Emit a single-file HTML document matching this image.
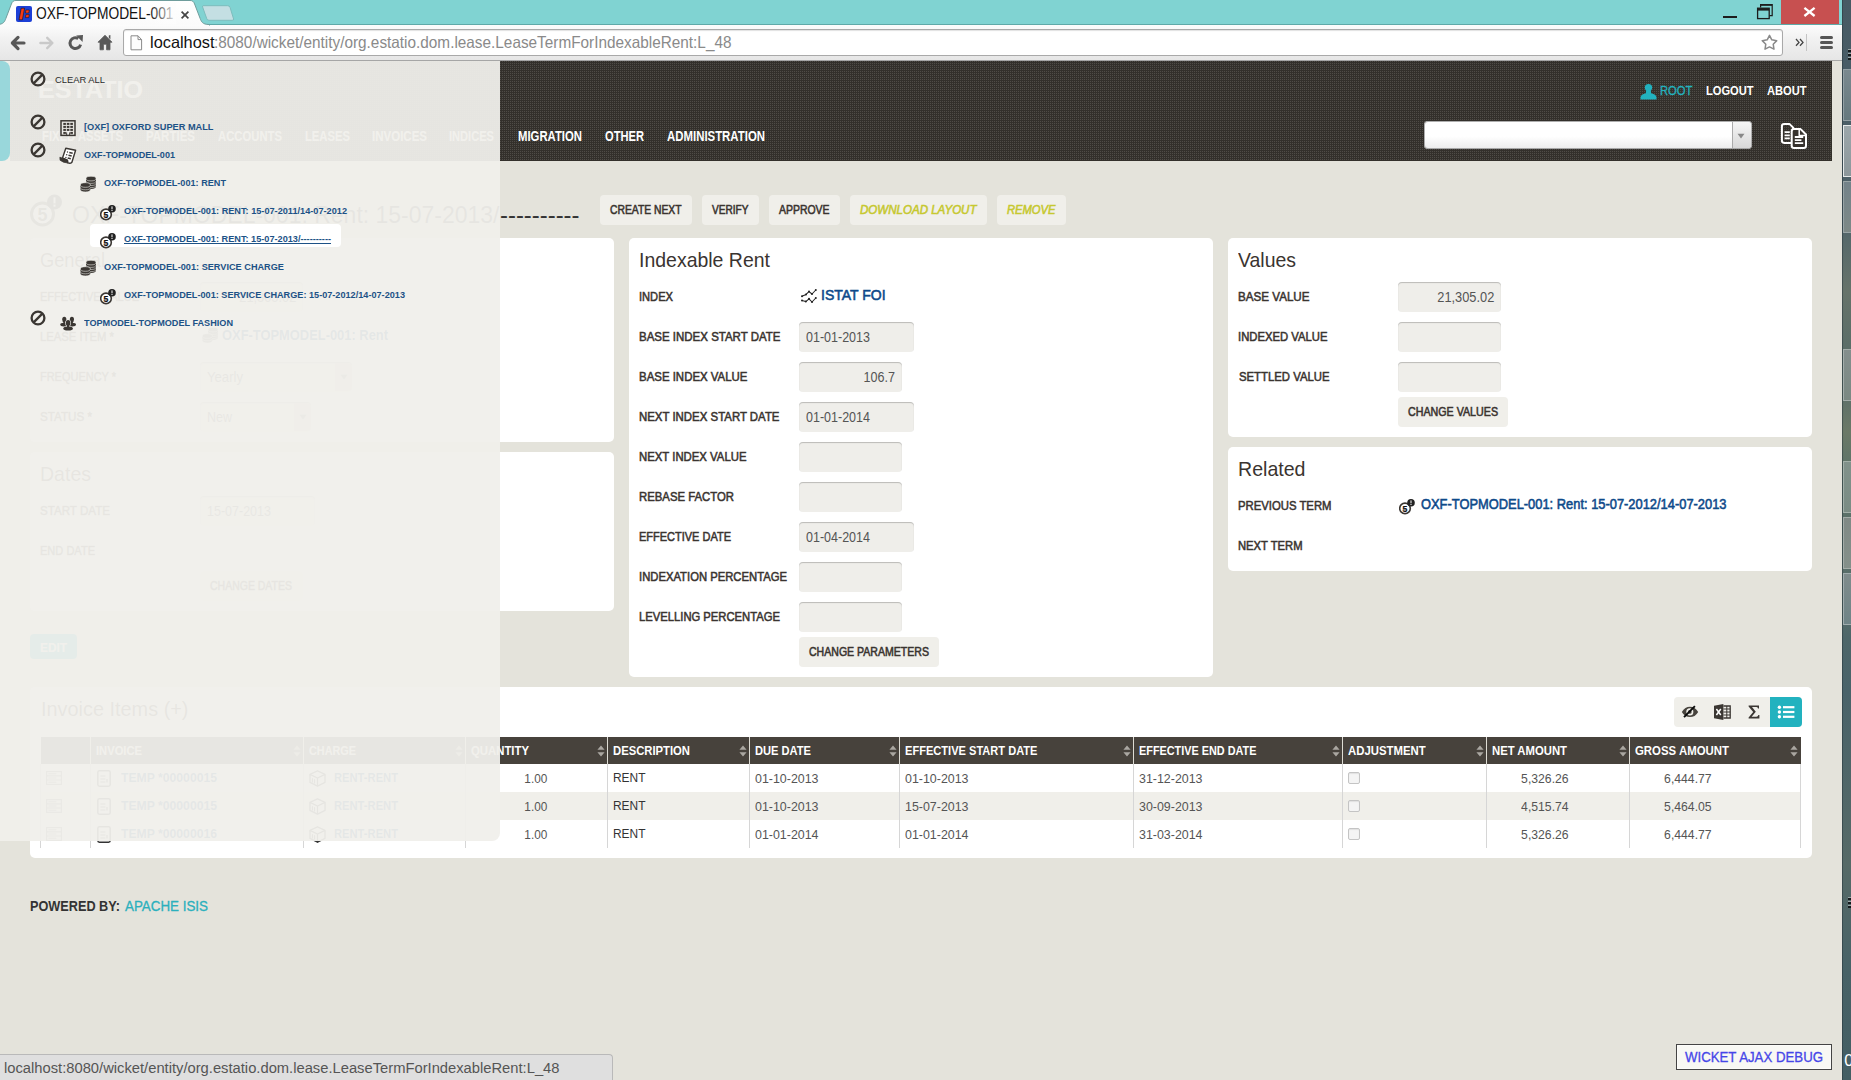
<!DOCTYPE html><html lang="en"><head><meta charset="utf-8"><title>OXF-TOPMODEL-001</title><style>
html,body{margin:0;padding:0}body{width:1851px;height:1080px;overflow:hidden;position:relative;background:#e4e3db;font-family:"Liberation Sans", Arial, sans-serif}
.t{position:absolute;white-space:pre;display:block}
</style></head><body>
<div style="position:absolute;left:0px;top:61px;width:1842px;height:1019px;background:#e4e3db;"></div>
<div style="position:absolute;left:10px;top:61px;width:1822px;height:100px;background:#33302b;background:linear-gradient(0deg,#33302b 50%,transparent 50%) 0 0/2px 2px,linear-gradient(90deg,#4f4c47 50%,#33302b 50%) 0 0/2px 2px;"></div>
<span class="t" style="top:73.68px;font-size:24px;line-height:31px;height:31px;color:#fff;font-weight:700;left:38px;transform-origin:0 50%;transform:scaleX(1.0453);">ESTATIO</span>
<span class="t" style="top:127.15px;font-size:14px;line-height:18px;height:18px;color:#fff;font-weight:700;left:42px;transform-origin:0 50%;transform:scaleX(0.8050);">FIXED ASSETS</span>
<span class="t" style="top:127.15px;font-size:14px;line-height:18px;height:18px;color:#fff;font-weight:700;left:146px;transform-origin:0 50%;transform:scaleX(0.8216);">PARTIES</span>
<span class="t" style="top:127.15px;font-size:14px;line-height:18px;height:18px;color:#fff;font-weight:700;left:218px;transform-origin:0 50%;transform:scaleX(0.8066);">ACCOUNTS</span>
<span class="t" style="top:127.15px;font-size:14px;line-height:18px;height:18px;color:#fff;font-weight:700;left:305px;transform-origin:0 50%;transform:scaleX(0.8033);">LEASES</span>
<span class="t" style="top:127.15px;font-size:14px;line-height:18px;height:18px;color:#fff;font-weight:700;left:372px;transform-origin:0 50%;transform:scaleX(0.8220);">INVOICES</span>
<span class="t" style="top:127.15px;font-size:14px;line-height:18px;height:18px;color:#fff;font-weight:700;left:449px;transform-origin:0 50%;transform:scaleX(0.7923);">INDICES</span>
<span class="t" style="top:127.15px;font-size:14px;line-height:18px;height:18px;color:#fff;font-weight:700;left:518px;transform-origin:0 50%;transform:scaleX(0.8093);">MIGRATION</span>
<span class="t" style="top:127.15px;font-size:14px;line-height:18px;height:18px;color:#fff;font-weight:700;left:605px;transform-origin:0 50%;transform:scaleX(0.7959);">OTHER</span>
<span class="t" style="top:127.15px;font-size:14px;line-height:18px;height:18px;color:#fff;font-weight:700;left:667px;transform-origin:0 50%;transform:scaleX(0.8147);">ADMINISTRATION</span>
<svg style="position:absolute;left:1640px;top:83px;" width="17" height="17" viewBox="0 0 17 17"><circle cx="8.5" cy="4.6" r="3.7" fill="#22b2bf"/><path d="M6.3 7 h4.4 l0.5 3.2 q5 1 5.3 4 l0 2.3 h-16 l0 -2.3 q0.3 -3 5.3 -4z" fill="#22b2bf"/></svg>
<span class="t" style="top:82.20px;font-size:13px;line-height:17px;height:17px;color:#22b2bf;left:1660px;transform-origin:0 50%;transform:scaleX(0.8652);-webkit-text-stroke:0.3px #22b2bf;">ROOT</span>
<span class="t" style="top:82.20px;font-size:13px;line-height:17px;height:17px;color:#fff;font-weight:700;left:1706px;transform-origin:0 50%;transform:scaleX(0.8542);">LOGOUT</span>
<span class="t" style="top:82.20px;font-size:13px;line-height:17px;height:17px;color:#fff;font-weight:700;left:1767px;transform-origin:0 50%;transform:scaleX(0.8546);">ABOUT</span>
<div style="position:absolute;left:1424px;top:121px;width:328px;height:28px;background:#fff;border-radius:4px;background:linear-gradient(#fff 55%,#ececec);box-shadow:0 0 0 1px rgba(120,120,120,0.6) inset;"></div>
<div style="position:absolute;left:1732px;top:122px;width:19px;height:26px;background:#e6e6e6;border-radius:0 3px 3px 0;border-left:1px solid #aaa;background:linear-gradient(#f6f6f6,#d8d8d8);box-sizing:border-box"></div>
<svg style="position:absolute;left:1737px;top:133px;" width="8" height="6" viewBox="0 0 8 6"><path d="M0.5 0.8h7L4 5.4z" fill="#888"/></svg>
<svg style="position:absolute;left:1780px;top:123px;" width="28" height="27" viewBox="0 0 28 27"><g fill="none" stroke="#fff" stroke-width="2" stroke-linejoin="round"><path d="M11 19.9 H4.2 Q1.9 19.9 1.9 17.6 V3.4 Q1.9 1.1 4.2 1.1 H9.6 L13.2 4.6 V7"/><path d="M14 25.1 Q11.7 25.1 11.7 22.8 V8.4 Q11.7 6.1 14 6.1 H20.6 L26 11.5 V22.8 Q26 25.1 23.7 25.1z" fill="#37332e"/><path d="M19.2 7 V12.6 H25" stroke-width="1.5"/></g><path d="M4.6 9.2h5.2M4.6 12.3h5.2M4.6 15.4h5.2M14.8 14h8.4M14.8 17.1h6.6M14.8 20.2h8.4" stroke="#fff" stroke-width="1.8"/></svg>
<svg style="position:absolute;left:29px;top:194px;" width="36" height="34" viewBox="0 0 36 34"><circle cx="13.5" cy="20" r="11" fill="#fff" stroke="#3b3733" stroke-width="3"/><text x="13.5" y="26.5" font-family="Liberation Sans,Arial,sans-serif" font-size="18" font-weight="700" text-anchor="middle" fill="#3b3733">5</text><circle cx="25.5" cy="8" r="7.6" fill="#222"/><rect x="24.5" y="3.4" width="2" height="6" fill="#fff"/><rect x="24.5" y="10.6" width="2" height="2" fill="#fff"/></svg>
<span class="t" style="top:199.01px;font-size:24.5px;line-height:32px;height:32px;color:#333;left:72px;transform-origin:0 50%;transform:scaleX(0.9381);">OXF-TOPMODEL-001: Rent: 15-07-2013/</span>
<span class="t" style="top:199.01px;font-size:24.5px;line-height:32px;height:32px;color:#333;left:500px;transform-origin:0 50%;transform:scaleX(0.9743);">----------</span>
<div style="position:absolute;left:600px;top:195px;width:92px;height:30px;background:#f0efea;border-radius:4px;"></div>
<span class="t" style="top:202.14px;font-size:12px;line-height:16px;height:16px;color:#3a3430;-webkit-text-stroke:0.55px #3a3430;left:610px;transform-origin:0 50%;transform:scaleX(0.8602);">CREATE NEXT</span>
<div style="position:absolute;left:702px;top:195px;width:57px;height:30px;background:#f0efea;border-radius:4px;"></div>
<span class="t" style="top:202.14px;font-size:12px;line-height:16px;height:16px;color:#3a3430;-webkit-text-stroke:0.55px #3a3430;left:712px;transform-origin:0 50%;transform:scaleX(0.8421);">VERIFY</span>
<div style="position:absolute;left:769px;top:195px;width:71px;height:30px;background:#f0efea;border-radius:4px;"></div>
<span class="t" style="top:202.14px;font-size:12px;line-height:16px;height:16px;color:#3a3430;-webkit-text-stroke:0.55px #3a3430;left:779px;transform-origin:0 50%;transform:scaleX(0.8702);">APPROVE</span>
<div style="position:absolute;left:850px;top:195px;width:137px;height:30px;background:#f0efea;border-radius:4px;"></div>
<span class="t" style="top:202.14px;font-size:12px;line-height:16px;height:16px;color:#c6c830;-webkit-text-stroke:0.55px #c6c830;font-style:italic;left:860px;transform-origin:0 50%;transform:scaleX(0.9618);">DOWNLOAD LAYOUT</span>
<div style="position:absolute;left:997px;top:195px;width:69px;height:30px;background:#f0efea;border-radius:4px;"></div>
<span class="t" style="top:202.14px;font-size:12px;line-height:16px;height:16px;color:#c6c830;-webkit-text-stroke:0.55px #c6c830;font-style:italic;left:1007px;transform-origin:0 50%;transform:scaleX(0.9324);">REMOVE</span>
<div style="position:absolute;left:30px;top:238px;width:584px;height:204px;background:#fff;border-radius:5px;"></div>
<div style="position:absolute;left:30px;top:452px;width:584px;height:158.5px;background:#fff;border-radius:5px;"></div>
<div style="position:absolute;left:629px;top:238px;width:584px;height:439px;background:#fff;border-radius:5px;"></div>
<div style="position:absolute;left:1228px;top:238px;width:584px;height:199px;background:#fff;border-radius:5px;"></div>
<div style="position:absolute;left:1228px;top:447px;width:584px;height:124px;background:#fff;border-radius:5px;"></div>
<div style="position:absolute;left:30px;top:687px;width:1782px;height:171px;background:#fff;border-radius:5px;"></div>
<span class="t" style="top:245.72px;font-size:21px;line-height:27px;height:27px;color:#3a3430;left:40px;transform-origin:0 50%;transform:scaleX(0.8699);">General</span>
<span class="t" style="top:288.00px;font-size:13px;line-height:17px;height:17px;color:#3a3430;-webkit-text-stroke:0.55px #3a3430;left:40px;transform-origin:0 50%;transform:scaleX(0.8476);">EFFECTIVE VALUE</span>
<div style="position:absolute;left:200px;top:282px;width:103px;height:30px;background:#efeeea;border-radius:4px;box-shadow:inset 0 1px 1px rgba(0,0,0,0.22);"></div>
<span class="t" style="top:288.15px;font-size:14px;line-height:18px;height:18px;color:#555555;right:1555px;transform-origin:100% 50%;transform:scaleX(0.9150);">21,305.02</span>
<span class="t" style="top:328.00px;font-size:13px;line-height:17px;height:17px;color:#3a3430;-webkit-text-stroke:0.55px #3a3430;left:40px;transform-origin:0 50%;transform:scaleX(0.8680);">LEASE ITEM *</span>
<svg style="position:absolute;left:202px;top:327px;" width="17" height="17" viewBox="0 0 17 17"><path d="M6 2.6 V10.6 A5 2.3 0 0 0 16 10.6 V2.6z" fill="#666"/><path d="M6 5.1 A5 2.3 0 0 0 16 5.1" fill="none" stroke="#efeeea" stroke-width="0.55"/><path d="M6 7.199999999999999 A5 2.3 0 0 0 16 7.199999999999999" fill="none" stroke="#efeeea" stroke-width="0.55"/><path d="M6 9.299999999999999 A5 2.3 0 0 0 16 9.299999999999999" fill="none" stroke="#efeeea" stroke-width="0.55"/><path d="M6 11.399999999999999 A5 2.3 0 0 0 16 11.399999999999999" fill="none" stroke="#efeeea" stroke-width="0.55"/><ellipse cx="11" cy="2.6" rx="5" ry="2.3" fill="#666" stroke="#efeeea" stroke-width="0.6"/><path d="M0.40000000000000036 9 V13.6 A5 2.3 0 0 0 10.4 13.6 V9z" fill="#666"/><path d="M0.40000000000000036 11.5 A5 2.3 0 0 0 10.4 11.5" fill="none" stroke="#efeeea" stroke-width="0.55"/><path d="M0.40000000000000036 13.6 A5 2.3 0 0 0 10.4 13.6" fill="none" stroke="#efeeea" stroke-width="0.55"/><ellipse cx="5.4" cy="9" rx="5" ry="2.3" fill="#666" stroke="#efeeea" stroke-width="0.6"/></svg>
<span class="t" style="top:326.15px;font-size:14px;line-height:18px;height:18px;color:#0e4a8a;font-weight:700;left:222px;transform-origin:0 50%;transform:scaleX(0.9212);">OXF-TOPMODEL-001: Rent</span>
<span class="t" style="top:368.00px;font-size:13px;line-height:17px;height:17px;color:#3a3430;-webkit-text-stroke:0.55px #3a3430;left:40px;transform-origin:0 50%;transform:scaleX(0.8439);">FREQUENCY *</span>
<div style="position:absolute;left:200px;top:362px;width:152px;height:30px;background:#efeeea;border-radius:4px;box-shadow:inset 0 1px 1px rgba(0,0,0,0.22);"></div>
<span class="t" style="top:368.15px;font-size:14px;line-height:18px;height:18px;color:#555555;left:207px;transform-origin:0 50%;transform:scaleX(0.9373);">Yearly</span>
<div style="position:absolute;left:335px;top:363px;width:17px;height:28px;background:#dcdbd5;border-radius:0 4px 4px 0;"></div>
<svg style="position:absolute;left:339.5px;top:374px;" width="8" height="6" viewBox="0 0 8 6"><path d="M0.5 0.8h7L4 5.4z" fill="#888"/></svg>
<span class="t" style="top:408.00px;font-size:13px;line-height:17px;height:17px;color:#3a3430;-webkit-text-stroke:0.55px #3a3430;left:40px;transform-origin:0 50%;transform:scaleX(0.8961);">STATUS *</span>
<div style="position:absolute;left:200px;top:402px;width:111px;height:30px;background:#efeeea;border-radius:4px;box-shadow:inset 0 1px 1px rgba(0,0,0,0.22);"></div>
<span class="t" style="top:408.15px;font-size:14px;line-height:18px;height:18px;color:#555555;left:207px;transform-origin:0 50%;transform:scaleX(0.8924);">New</span>
<div style="position:absolute;left:294px;top:403px;width:17px;height:28px;background:#dcdbd5;border-radius:0 4px 4px 0;"></div>
<svg style="position:absolute;left:298.5px;top:414px;" width="8" height="6" viewBox="0 0 8 6"><path d="M0.5 0.8h7L4 5.4z" fill="#888"/></svg>
<span class="t" style="top:460.22px;font-size:21px;line-height:27px;height:27px;color:#3a3430;left:40px;transform-origin:0 50%;transform:scaleX(0.9296);">Dates</span>
<span class="t" style="top:502.00px;font-size:13px;line-height:17px;height:17px;color:#3a3430;-webkit-text-stroke:0.55px #3a3430;left:40px;transform-origin:0 50%;transform:scaleX(0.8917);">START DATE</span>
<div style="position:absolute;left:200px;top:496px;width:115px;height:30px;background:#efeeea;border-radius:4px;box-shadow:inset 0 1px 1px rgba(0,0,0,0.22);"></div>
<span class="t" style="top:502.15px;font-size:14px;line-height:18px;height:18px;color:#555555;left:207px;transform-origin:0 50%;transform:scaleX(0.8935);">15-07-2013</span>
<span class="t" style="top:542.00px;font-size:13px;line-height:17px;height:17px;color:#3a3430;-webkit-text-stroke:0.55px #3a3430;left:40px;transform-origin:0 50%;transform:scaleX(0.8492);">END DATE</span>
<div style="position:absolute;left:200px;top:571px;width:103px;height:30px;background:#f0efea;border-radius:4px;"></div>
<span class="t" style="top:578.14px;font-size:12px;line-height:16px;height:16px;color:#3a3430;-webkit-text-stroke:0.55px #3a3430;left:210px;transform-origin:0 50%;transform:scaleX(0.8742);">CHANGE DATES</span>
<div style="position:absolute;left:30px;top:634px;width:47px;height:25px;background:#22b2bf;border-radius:4px;"></div>
<span class="t" style="top:638.50px;font-size:13px;line-height:17px;height:17px;color:#fff;font-weight:700;left:40px;transform-origin:0 50%;transform:scaleX(0.9114);">EDIT</span>
<span class="t" style="top:246.22px;font-size:21px;line-height:27px;height:27px;color:#3a3430;left:639px;transform-origin:0 50%;transform:scaleX(0.9272);">Indexable Rent</span>
<span class="t" style="top:288.00px;font-size:13px;line-height:17px;height:17px;color:#3a3430;-webkit-text-stroke:0.55px #3a3430;left:639px;transform-origin:0 50%;transform:scaleX(0.8557);">INDEX</span>
<span class="t" style="top:328.00px;font-size:13px;line-height:17px;height:17px;color:#3a3430;-webkit-text-stroke:0.55px #3a3430;left:639px;transform-origin:0 50%;transform:scaleX(0.8836);">BASE INDEX START DATE</span>
<div style="position:absolute;left:799px;top:322px;width:115px;height:30px;background:#efeeea;border-radius:4px;box-shadow:inset 0 1px 1px rgba(0,0,0,0.22);"></div>
<span class="t" style="top:328.15px;font-size:14px;line-height:18px;height:18px;color:#555555;left:806px;transform-origin:0 50%;transform:scaleX(0.8935);">01-01-2013</span>
<span class="t" style="top:368.00px;font-size:13px;line-height:17px;height:17px;color:#3a3430;-webkit-text-stroke:0.55px #3a3430;left:639px;transform-origin:0 50%;transform:scaleX(0.8799);">BASE INDEX VALUE</span>
<div style="position:absolute;left:799px;top:362px;width:103px;height:30px;background:#efeeea;border-radius:4px;box-shadow:inset 0 1px 1px rgba(0,0,0,0.22);"></div>
<span class="t" style="top:368.15px;font-size:14px;line-height:18px;height:18px;color:#555555;right:956px;transform-origin:100% 50%;transform:scaleX(0.8988);">106.7</span>
<span class="t" style="top:408.00px;font-size:13px;line-height:17px;height:17px;color:#3a3430;-webkit-text-stroke:0.55px #3a3430;left:639px;transform-origin:0 50%;transform:scaleX(0.8787);">NEXT INDEX START DATE</span>
<div style="position:absolute;left:799px;top:402px;width:115px;height:30px;background:#efeeea;border-radius:4px;box-shadow:inset 0 1px 1px rgba(0,0,0,0.22);"></div>
<span class="t" style="top:408.15px;font-size:14px;line-height:18px;height:18px;color:#555555;left:806px;transform-origin:0 50%;transform:scaleX(0.8935);">01-01-2014</span>
<span class="t" style="top:448.00px;font-size:13px;line-height:17px;height:17px;color:#3a3430;-webkit-text-stroke:0.55px #3a3430;left:639px;transform-origin:0 50%;transform:scaleX(0.8735);">NEXT INDEX VALUE</span>
<div style="position:absolute;left:799px;top:442px;width:103px;height:30px;background:#efeeea;border-radius:4px;box-shadow:inset 0 1px 1px rgba(0,0,0,0.22);"></div>
<span class="t" style="top:488.00px;font-size:13px;line-height:17px;height:17px;color:#3a3430;-webkit-text-stroke:0.55px #3a3430;left:639px;transform-origin:0 50%;transform:scaleX(0.8728);">REBASE FACTOR</span>
<div style="position:absolute;left:799px;top:482px;width:103px;height:30px;background:#efeeea;border-radius:4px;box-shadow:inset 0 1px 1px rgba(0,0,0,0.22);"></div>
<span class="t" style="top:528.00px;font-size:13px;line-height:17px;height:17px;color:#3a3430;-webkit-text-stroke:0.55px #3a3430;left:639px;transform-origin:0 50%;transform:scaleX(0.8454);">EFFECTIVE DATE</span>
<div style="position:absolute;left:799px;top:522px;width:115px;height:30px;background:#efeeea;border-radius:4px;box-shadow:inset 0 1px 1px rgba(0,0,0,0.22);"></div>
<span class="t" style="top:528.15px;font-size:14px;line-height:18px;height:18px;color:#555555;left:806px;transform-origin:0 50%;transform:scaleX(0.8935);">01-04-2014</span>
<span class="t" style="top:568.00px;font-size:13px;line-height:17px;height:17px;color:#3a3430;-webkit-text-stroke:0.55px #3a3430;left:639px;transform-origin:0 50%;transform:scaleX(0.8669);">INDEXATION PERCENTAGE</span>
<div style="position:absolute;left:799px;top:562px;width:103px;height:30px;background:#efeeea;border-radius:4px;box-shadow:inset 0 1px 1px rgba(0,0,0,0.22);"></div>
<span class="t" style="top:608.00px;font-size:13px;line-height:17px;height:17px;color:#3a3430;-webkit-text-stroke:0.55px #3a3430;left:639px;transform-origin:0 50%;transform:scaleX(0.8648);">LEVELLING PERCENTAGE</span>
<div style="position:absolute;left:799px;top:602px;width:103px;height:30px;background:#efeeea;border-radius:4px;box-shadow:inset 0 1px 1px rgba(0,0,0,0.22);"></div>
<svg style="position:absolute;left:801px;top:289px;" width="17" height="15" viewBox="0 0 17 15"><g fill="none" stroke="#222" stroke-width="1.05" stroke-linejoin="round"><path d="M1 7.2 L5 5.4 L8 2.6 L11 5 L14.8 1"/><path d="M1 11.5 L4.8 12.6 L8 9.8 L11 13 L14.8 9"/></g><g fill="#222"><circle cx="1" cy="7.2" r="1"/><circle cx="5" cy="5.4" r="1"/><circle cx="8" cy="2.6" r="1"/><circle cx="11" cy="5" r="1"/><circle cx="14.8" cy="1" r="1"/><circle cx="1" cy="11.5" r="1"/><circle cx="4.8" cy="12.6" r="1"/><circle cx="8" cy="9.8" r="1"/><circle cx="11" cy="13" r="1"/><circle cx="14.8" cy="9" r="1"/></g></svg>
<span class="t" style="top:286.15px;font-size:14px;line-height:18px;height:18px;color:#0e4a8a;left:821px;transform-origin:0 50%;-webkit-text-stroke:0.55px #0e4a8a;">ISTAT FOI</span>
<div style="position:absolute;left:799px;top:637px;width:140px;height:30px;background:#f0efea;border-radius:4px;"></div>
<span class="t" style="top:644.14px;font-size:12px;line-height:16px;height:16px;color:#3a3430;-webkit-text-stroke:0.55px #3a3430;left:809px;transform-origin:0 50%;transform:scaleX(0.8793);">CHANGE PARAMETERS</span>
<span class="t" style="top:246.22px;font-size:21px;line-height:27px;height:27px;color:#3a3430;left:1238px;transform-origin:0 50%;transform:scaleX(0.9257);">Values</span>
<span class="t" style="top:288.00px;font-size:13px;line-height:17px;height:17px;color:#3a3430;-webkit-text-stroke:0.55px #3a3430;left:1238px;transform-origin:0 50%;transform:scaleX(0.8941);">BASE VALUE</span>
<span class="t" style="top:328.00px;font-size:13px;line-height:17px;height:17px;color:#3a3430;-webkit-text-stroke:0.55px #3a3430;left:1238px;transform-origin:0 50%;transform:scaleX(0.8683);">INDEXED VALUE</span>
<span class="t" style="top:368.00px;font-size:13px;line-height:17px;height:17px;color:#3a3430;-webkit-text-stroke:0.55px #3a3430;left:1239px;transform-origin:0 50%;transform:scaleX(0.8719);">SETTLED VALUE</span>
<div style="position:absolute;left:1398px;top:282px;width:103px;height:30px;background:#efeeea;border-radius:4px;box-shadow:inset 0 1px 1px rgba(0,0,0,0.22);"></div>
<div style="position:absolute;left:1398px;top:322px;width:103px;height:30px;background:#efeeea;border-radius:4px;box-shadow:inset 0 1px 1px rgba(0,0,0,0.22);"></div>
<div style="position:absolute;left:1398px;top:362px;width:103px;height:30px;background:#efeeea;border-radius:4px;box-shadow:inset 0 1px 1px rgba(0,0,0,0.22);"></div>
<span class="t" style="top:288.15px;font-size:14px;line-height:18px;height:18px;color:#555555;right:357px;transform-origin:100% 50%;transform:scaleX(0.9150);">21,305.02</span>
<div style="position:absolute;left:1398px;top:397px;width:110px;height:30px;background:#f0efea;border-radius:4px;"></div>
<span class="t" style="top:404.14px;font-size:12px;line-height:16px;height:16px;color:#3a3430;-webkit-text-stroke:0.55px #3a3430;left:1408px;transform-origin:0 50%;transform:scaleX(0.8899);">CHANGE VALUES</span>
<span class="t" style="top:455.22px;font-size:21px;line-height:27px;height:27px;color:#3a3430;left:1238px;transform-origin:0 50%;transform:scaleX(0.9324);">Related</span>
<span class="t" style="top:497.00px;font-size:13px;line-height:17px;height:17px;color:#3a3430;-webkit-text-stroke:0.55px #3a3430;left:1238px;transform-origin:0 50%;transform:scaleX(0.8707);">PREVIOUS TERM</span>
<span class="t" style="top:537.00px;font-size:13px;line-height:17px;height:17px;color:#3a3430;-webkit-text-stroke:0.55px #3a3430;left:1238px;transform-origin:0 50%;transform:scaleX(0.8640);">NEXT TERM</span>
<svg style="position:absolute;left:1399px;top:497.5px;" width="17" height="17" viewBox="0 0 17 17"><circle cx="6" cy="10.4" r="5.3" fill="#fff" stroke="#3b3733" stroke-width="1.6"/><text x="6" y="13.5" font-family="Liberation Sans,Arial,sans-serif" font-size="8.6" font-weight="700" text-anchor="middle" fill="#111" stroke="#111" stroke-width="0.25">5</text><circle cx="12" cy="4.7" r="3.8" fill="#222"/><rect x="11.5" y="2.4" width="1" height="2.9" fill="#fff"/><rect x="11.5" y="6" width="1" height="1" fill="#fff"/></svg>
<span class="t" style="top:495.15px;font-size:14px;line-height:18px;height:18px;color:#0e4a8a;left:1420.5px;transform-origin:0 50%;transform:scaleX(0.9201);-webkit-text-stroke:0.55px #0e4a8a;">OXF-TOPMODEL-001: Rent: 15-07-2012/14-07-2013</span>
<span class="t" style="top:695.22px;font-size:21px;line-height:27px;height:27px;color:#3a3430;left:40.5px;transform-origin:0 50%;transform:scaleX(0.9467);">Invoice Items (+)</span>
<div style="position:absolute;left:1674px;top:697px;width:128px;height:30px;background:#f0efea;border-radius:4px;"></div>
<div style="position:absolute;left:1770px;top:697px;width:32px;height:30px;background:#22b2bf;border-radius:0 4px 4px 0;"></div>
<svg style="position:absolute;left:1681px;top:704px;" width="18" height="16" viewBox="0 0 18 16"><path d="M0.8 7.9 Q4 2.7 9 2.7 Q14 2.7 17.2 7.9 Q14 13.1 9 13.1 Q4 13.1 0.8 7.9z" fill="#47433d"/><circle cx="8.8" cy="7.9" r="2.7" fill="none" stroke="#f0efea" stroke-width="1.7"/><path d="M3 13.2 L13.9 2.1" stroke="#0a0a0a" stroke-width="1.9"/></svg>
<svg style="position:absolute;left:1714px;top:704px;" width="17" height="16" viewBox="0 0 17 16"><path d="M0 1.8 L9.4 0 V16 L0 14.2z" fill="#3b3733"/><path d="M9.4 2h6.8v12H9.4" fill="none" stroke="#3b3733" stroke-width="1.3"/><path d="M9.4 5h6.8M9.4 8h6.8M9.4 11h6.8M12.8 2v12" stroke="#3b3733" stroke-width="1"/><path d="M2.4 5 L6.8 11 M6.8 5 L2.4 11" stroke="#fff" stroke-width="1.5"/></svg>
<svg style="position:absolute;left:1748px;top:705px;" width="12" height="14" viewBox="0 0 12 14"><path d="M0.6 0.4 H11 V3.4 H10 Q9.8 2 8.2 2 H4 L7.8 6.8 L3.6 11.8 H8.4 Q10 11.8 10.4 10 H11.4 V13.6 H0.6 V12.6 L5.2 7 L0.6 1.4z" fill="#3b3733"/></svg>
<svg style="position:absolute;left:1777px;top:705px;" width="18" height="14" viewBox="0 0 18 14"><g fill="#fff"><circle cx="2.4" cy="2.2" r="1.7"/><circle cx="2.4" cy="7" r="1.7"/><circle cx="2.4" cy="11.8" r="1.7"/><rect x="6" y="1.1" width="11.4" height="2.2"/><rect x="6" y="5.9" width="11.4" height="2.2"/><rect x="6" y="10.7" width="11.4" height="2.2"/></g></svg>
<div style="position:absolute;left:41px;top:737px;width:1760px;height:27px;background:#47423c;"></div>
<div style="position:absolute;left:41px;top:792px;width:1760px;height:28px;background:#f0efea;"></div>
<div style="position:absolute;left:90px;top:737px;width:1px;height:27px;background:#dedcd4;"></div>
<div style="position:absolute;left:303px;top:737px;width:1px;height:27px;background:#dedcd4;"></div>
<div style="position:absolute;left:465px;top:737px;width:1px;height:27px;background:#dedcd4;"></div>
<div style="position:absolute;left:607px;top:737px;width:1px;height:27px;background:#dedcd4;"></div>
<div style="position:absolute;left:749px;top:737px;width:1px;height:27px;background:#dedcd4;"></div>
<div style="position:absolute;left:899px;top:737px;width:1px;height:27px;background:#dedcd4;"></div>
<div style="position:absolute;left:1133px;top:737px;width:1px;height:27px;background:#dedcd4;"></div>
<div style="position:absolute;left:1342px;top:737px;width:1px;height:27px;background:#dedcd4;"></div>
<div style="position:absolute;left:1486px;top:737px;width:1px;height:27px;background:#dedcd4;"></div>
<div style="position:absolute;left:1629px;top:737px;width:1px;height:27px;background:#dedcd4;"></div>
<div style="position:absolute;left:40px;top:764px;width:1px;height:84px;background:#d6d6d6;"></div>
<div style="position:absolute;left:90px;top:764px;width:1px;height:84px;background:#d6d6d6;"></div>
<div style="position:absolute;left:303px;top:764px;width:1px;height:84px;background:#d6d6d6;"></div>
<div style="position:absolute;left:465px;top:764px;width:1px;height:84px;background:#d6d6d6;"></div>
<div style="position:absolute;left:607px;top:764px;width:1px;height:84px;background:#d6d6d6;"></div>
<div style="position:absolute;left:749px;top:764px;width:1px;height:84px;background:#d6d6d6;"></div>
<div style="position:absolute;left:899px;top:764px;width:1px;height:84px;background:#d6d6d6;"></div>
<div style="position:absolute;left:1133px;top:764px;width:1px;height:84px;background:#d6d6d6;"></div>
<div style="position:absolute;left:1342px;top:764px;width:1px;height:84px;background:#d6d6d6;"></div>
<div style="position:absolute;left:1486px;top:764px;width:1px;height:84px;background:#d6d6d6;"></div>
<div style="position:absolute;left:1629px;top:764px;width:1px;height:84px;background:#d6d6d6;"></div>
<div style="position:absolute;left:1800px;top:764px;width:1px;height:84px;background:#d6d6d6;"></div>
<span class="t" style="top:742.00px;font-size:13px;line-height:17px;height:17px;color:#fff;font-weight:700;left:96px;transform-origin:0 50%;transform:scaleX(0.8603);">INVOICE</span>
<span class="t" style="top:742.00px;font-size:13px;line-height:17px;height:17px;color:#fff;font-weight:700;left:309px;transform-origin:0 50%;transform:scaleX(0.8342);">CHARGE</span>
<span class="t" style="top:742.00px;font-size:13px;line-height:17px;height:17px;color:#fff;font-weight:700;left:471px;transform-origin:0 50%;transform:scaleX(0.8728);">QUANTITY</span>
<span class="t" style="top:742.00px;font-size:13px;line-height:17px;height:17px;color:#fff;font-weight:700;left:613px;transform-origin:0 50%;transform:scaleX(0.8667);">DESCRIPTION</span>
<span class="t" style="top:742.00px;font-size:13px;line-height:17px;height:17px;color:#fff;font-weight:700;left:755px;transform-origin:0 50%;transform:scaleX(0.8552);">DUE DATE</span>
<span class="t" style="top:742.00px;font-size:13px;line-height:17px;height:17px;color:#fff;font-weight:700;left:905px;transform-origin:0 50%;transform:scaleX(0.8519);">EFFECTIVE START DATE</span>
<span class="t" style="top:742.00px;font-size:13px;line-height:17px;height:17px;color:#fff;font-weight:700;left:1139px;transform-origin:0 50%;transform:scaleX(0.8356);">EFFECTIVE END DATE</span>
<span class="t" style="top:742.00px;font-size:13px;line-height:17px;height:17px;color:#fff;font-weight:700;left:1348px;transform-origin:0 50%;transform:scaleX(0.8751);">ADJUSTMENT</span>
<span class="t" style="top:742.00px;font-size:13px;line-height:17px;height:17px;color:#fff;font-weight:700;left:1492px;transform-origin:0 50%;transform:scaleX(0.8702);">NET AMOUNT</span>
<span class="t" style="top:742.00px;font-size:13px;line-height:17px;height:17px;color:#fff;font-weight:700;left:1635px;transform-origin:0 50%;transform:scaleX(0.8774);">GROSS AMOUNT</span>
<svg style="position:absolute;left:293px;top:744.5px;" width="8" height="12" viewBox="0 0 8 12"><path d="M4 0.6 L7.6 4.8 L0.4 4.8z M4 11.4 L7.6 7.2 L0.4 7.2z" fill="#aaa7a1"/></svg>
<svg style="position:absolute;left:455px;top:744.5px;" width="8" height="12" viewBox="0 0 8 12"><path d="M4 0.6 L7.6 4.8 L0.4 4.8z M4 11.4 L7.6 7.2 L0.4 7.2z" fill="#aaa7a1"/></svg>
<svg style="position:absolute;left:597px;top:744.5px;" width="8" height="12" viewBox="0 0 8 12"><path d="M4 0.6 L7.6 4.8 L0.4 4.8z M4 11.4 L7.6 7.2 L0.4 7.2z" fill="#aaa7a1"/></svg>
<svg style="position:absolute;left:739px;top:744.5px;" width="8" height="12" viewBox="0 0 8 12"><path d="M4 0.6 L7.6 4.8 L0.4 4.8z M4 11.4 L7.6 7.2 L0.4 7.2z" fill="#aaa7a1"/></svg>
<svg style="position:absolute;left:889px;top:744.5px;" width="8" height="12" viewBox="0 0 8 12"><path d="M4 0.6 L7.6 4.8 L0.4 4.8z M4 11.4 L7.6 7.2 L0.4 7.2z" fill="#aaa7a1"/></svg>
<svg style="position:absolute;left:1123px;top:744.5px;" width="8" height="12" viewBox="0 0 8 12"><path d="M4 0.6 L7.6 4.8 L0.4 4.8z M4 11.4 L7.6 7.2 L0.4 7.2z" fill="#aaa7a1"/></svg>
<svg style="position:absolute;left:1332px;top:744.5px;" width="8" height="12" viewBox="0 0 8 12"><path d="M4 0.6 L7.6 4.8 L0.4 4.8z M4 11.4 L7.6 7.2 L0.4 7.2z" fill="#aaa7a1"/></svg>
<svg style="position:absolute;left:1476px;top:744.5px;" width="8" height="12" viewBox="0 0 8 12"><path d="M4 0.6 L7.6 4.8 L0.4 4.8z M4 11.4 L7.6 7.2 L0.4 7.2z" fill="#aaa7a1"/></svg>
<svg style="position:absolute;left:1619px;top:744.5px;" width="8" height="12" viewBox="0 0 8 12"><path d="M4 0.6 L7.6 4.8 L0.4 4.8z M4 11.4 L7.6 7.2 L0.4 7.2z" fill="#aaa7a1"/></svg>
<svg style="position:absolute;left:1790px;top:744.5px;" width="8" height="12" viewBox="0 0 8 12"><path d="M4 0.6 L7.6 4.8 L0.4 4.8z M4 11.4 L7.6 7.2 L0.4 7.2z" fill="#aaa7a1"/></svg>
<svg style="position:absolute;left:46px;top:771px;" width="16" height="14" viewBox="0 0 16 14"><g fill="none" stroke="#777" stroke-width="1.2"><rect x="0.6" y="0.6" width="14.8" height="12.8"/><path d="M0.6 4.8h14.8M0.6 9h14.8"/></g><path d="M2.4 2.8h8M2.4 7h8M2.4 11.2h8" stroke="#777" stroke-width="1"/></svg>
<svg style="position:absolute;left:97px;top:770px;" width="14" height="17" viewBox="0 0 14 17"><rect x="0.8" y="0.8" width="12.4" height="15.4" rx="1.6" fill="#fff" stroke="#333" stroke-width="1.5"/><path d="M3.4 6h5M3.4 9h5M3.4 12h5M10 9v3.4" stroke="#333" stroke-width="1.2"/></svg>
<span class="t" style="top:769.00px;font-size:13px;line-height:17px;height:17px;color:#0e4a8a;font-weight:700;left:121px;transform-origin:0 50%;transform:scaleX(0.9376);">TEMP *00000015</span>
<svg style="position:absolute;left:309px;top:770px;" width="17" height="17" viewBox="0 0 17 17"><path d="M8.5 0.8 L16 4.4 V12.4 L8.5 16.2 L1 12.4 V4.4z" fill="#fff" stroke="#333" stroke-width="1.4" stroke-linejoin="round"/><path d="M1 4.4 L8.5 8 L16 4.4 M8.5 8 V16.2" fill="none" stroke="#333" stroke-width="1.2"/><path d="M3.4 8.2v4.4M5.6 9.2v4.4" stroke="#333" stroke-width="1"/></svg>
<span class="t" style="top:769.00px;font-size:13px;line-height:17px;height:17px;color:#0e4a8a;font-weight:700;left:334px;transform-origin:0 50%;transform:scaleX(0.8603);">RENT-RENT</span>
<span class="t" style="top:770.00px;font-size:13px;line-height:17px;height:17px;color:#555555;right:1303.5px;transform-origin:100% 50%;transform:scaleX(0.9086);">1.00</span>
<span class="t" style="top:769.53px;font-size:12.6px;line-height:16px;height:16px;color:#333;left:613px;transform-origin:0 50%;transform:scaleX(0.9476);">RENT</span>
<span class="t" style="top:770.00px;font-size:13px;line-height:17px;height:17px;color:#555555;left:755.3px;transform-origin:0 50%;transform:scaleX(0.9549);">01-10-2013</span>
<span class="t" style="top:770.00px;font-size:13px;line-height:17px;height:17px;color:#555555;left:905.3px;transform-origin:0 50%;transform:scaleX(0.9549);">01-10-2013</span>
<span class="t" style="top:770.00px;font-size:13px;line-height:17px;height:17px;color:#555555;left:1139.3px;transform-origin:0 50%;transform:scaleX(0.9549);">31-12-2013</span>
<div style="position:absolute;left:1348px;top:772px;width:12px;height:12px;background:#f4f4f4;border:1px solid #c4c4c4;border-radius:2px;box-sizing:border-box;box-shadow:inset 0 1px 1px rgba(0,0,0,0.08);"></div>
<span class="t" style="top:770.00px;font-size:13px;line-height:17px;height:17px;color:#555555;right:282.20000000000005px;transform-origin:100% 50%;transform:scaleX(0.9386);">5,326.26</span>
<span class="t" style="top:770.00px;font-size:13px;line-height:17px;height:17px;color:#555555;right:139.5px;transform-origin:100% 50%;transform:scaleX(0.9386);">6,444.77</span>
<svg style="position:absolute;left:46px;top:799px;" width="16" height="14" viewBox="0 0 16 14"><g fill="none" stroke="#777" stroke-width="1.2"><rect x="0.6" y="0.6" width="14.8" height="12.8"/><path d="M0.6 4.8h14.8M0.6 9h14.8"/></g><path d="M2.4 2.8h8M2.4 7h8M2.4 11.2h8" stroke="#777" stroke-width="1"/></svg>
<svg style="position:absolute;left:97px;top:798px;" width="14" height="17" viewBox="0 0 14 17"><rect x="0.8" y="0.8" width="12.4" height="15.4" rx="1.6" fill="#fff" stroke="#333" stroke-width="1.5"/><path d="M3.4 6h5M3.4 9h5M3.4 12h5M10 9v3.4" stroke="#333" stroke-width="1.2"/></svg>
<span class="t" style="top:797.00px;font-size:13px;line-height:17px;height:17px;color:#0e4a8a;font-weight:700;left:121px;transform-origin:0 50%;transform:scaleX(0.9376);">TEMP *00000015</span>
<svg style="position:absolute;left:309px;top:798px;" width="17" height="17" viewBox="0 0 17 17"><path d="M8.5 0.8 L16 4.4 V12.4 L8.5 16.2 L1 12.4 V4.4z" fill="#fff" stroke="#333" stroke-width="1.4" stroke-linejoin="round"/><path d="M1 4.4 L8.5 8 L16 4.4 M8.5 8 V16.2" fill="none" stroke="#333" stroke-width="1.2"/><path d="M3.4 8.2v4.4M5.6 9.2v4.4" stroke="#333" stroke-width="1"/></svg>
<span class="t" style="top:797.00px;font-size:13px;line-height:17px;height:17px;color:#0e4a8a;font-weight:700;left:334px;transform-origin:0 50%;transform:scaleX(0.8603);">RENT-RENT</span>
<span class="t" style="top:798.00px;font-size:13px;line-height:17px;height:17px;color:#555555;right:1303.5px;transform-origin:100% 50%;transform:scaleX(0.9086);">1.00</span>
<span class="t" style="top:797.53px;font-size:12.6px;line-height:16px;height:16px;color:#333;left:613px;transform-origin:0 50%;transform:scaleX(0.9476);">RENT</span>
<span class="t" style="top:798.00px;font-size:13px;line-height:17px;height:17px;color:#555555;left:755.3px;transform-origin:0 50%;transform:scaleX(0.9549);">01-10-2013</span>
<span class="t" style="top:798.00px;font-size:13px;line-height:17px;height:17px;color:#555555;left:905.3px;transform-origin:0 50%;transform:scaleX(0.9549);">15-07-2013</span>
<span class="t" style="top:798.00px;font-size:13px;line-height:17px;height:17px;color:#555555;left:1139.3px;transform-origin:0 50%;transform:scaleX(0.9549);">30-09-2013</span>
<div style="position:absolute;left:1348px;top:800px;width:12px;height:12px;background:#f4f4f4;border:1px solid #c4c4c4;border-radius:2px;box-sizing:border-box;box-shadow:inset 0 1px 1px rgba(0,0,0,0.08);"></div>
<span class="t" style="top:798.00px;font-size:13px;line-height:17px;height:17px;color:#555555;right:282.20000000000005px;transform-origin:100% 50%;transform:scaleX(0.9386);">4,515.74</span>
<span class="t" style="top:798.00px;font-size:13px;line-height:17px;height:17px;color:#555555;right:139.5px;transform-origin:100% 50%;transform:scaleX(0.9386);">5,464.05</span>
<svg style="position:absolute;left:46px;top:827px;" width="16" height="14" viewBox="0 0 16 14"><g fill="none" stroke="#777" stroke-width="1.2"><rect x="0.6" y="0.6" width="14.8" height="12.8"/><path d="M0.6 4.8h14.8M0.6 9h14.8"/></g><path d="M2.4 2.8h8M2.4 7h8M2.4 11.2h8" stroke="#777" stroke-width="1"/></svg>
<svg style="position:absolute;left:97px;top:826px;" width="14" height="17" viewBox="0 0 14 17"><rect x="0.8" y="0.8" width="12.4" height="15.4" rx="1.6" fill="#fff" stroke="#333" stroke-width="1.5"/><path d="M3.4 6h5M3.4 9h5M3.4 12h5M10 9v3.4" stroke="#333" stroke-width="1.2"/></svg>
<span class="t" style="top:825.00px;font-size:13px;line-height:17px;height:17px;color:#0e4a8a;font-weight:700;left:121px;transform-origin:0 50%;transform:scaleX(0.9376);">TEMP *00000016</span>
<svg style="position:absolute;left:309px;top:826px;" width="17" height="17" viewBox="0 0 17 17"><path d="M8.5 0.8 L16 4.4 V12.4 L8.5 16.2 L1 12.4 V4.4z" fill="#fff" stroke="#333" stroke-width="1.4" stroke-linejoin="round"/><path d="M1 4.4 L8.5 8 L16 4.4 M8.5 8 V16.2" fill="none" stroke="#333" stroke-width="1.2"/><path d="M3.4 8.2v4.4M5.6 9.2v4.4" stroke="#333" stroke-width="1"/></svg>
<span class="t" style="top:825.00px;font-size:13px;line-height:17px;height:17px;color:#0e4a8a;font-weight:700;left:334px;transform-origin:0 50%;transform:scaleX(0.8603);">RENT-RENT</span>
<span class="t" style="top:826.00px;font-size:13px;line-height:17px;height:17px;color:#555555;right:1303.5px;transform-origin:100% 50%;transform:scaleX(0.9086);">1.00</span>
<span class="t" style="top:825.53px;font-size:12.6px;line-height:16px;height:16px;color:#333;left:613px;transform-origin:0 50%;transform:scaleX(0.9476);">RENT</span>
<span class="t" style="top:826.00px;font-size:13px;line-height:17px;height:17px;color:#555555;left:755.3px;transform-origin:0 50%;transform:scaleX(0.9549);">01-01-2014</span>
<span class="t" style="top:826.00px;font-size:13px;line-height:17px;height:17px;color:#555555;left:905.3px;transform-origin:0 50%;transform:scaleX(0.9549);">01-01-2014</span>
<span class="t" style="top:826.00px;font-size:13px;line-height:17px;height:17px;color:#555555;left:1139.3px;transform-origin:0 50%;transform:scaleX(0.9549);">31-03-2014</span>
<div style="position:absolute;left:1348px;top:828px;width:12px;height:12px;background:#f4f4f4;border:1px solid #c4c4c4;border-radius:2px;box-sizing:border-box;box-shadow:inset 0 1px 1px rgba(0,0,0,0.08);"></div>
<span class="t" style="top:826.00px;font-size:13px;line-height:17px;height:17px;color:#555555;right:282.20000000000005px;transform-origin:100% 50%;transform:scaleX(0.9386);">5,326.26</span>
<span class="t" style="top:826.00px;font-size:13px;line-height:17px;height:17px;color:#555555;right:139.5px;transform-origin:100% 50%;transform:scaleX(0.9386);">6,444.77</span>
<span class="t" style="top:897.15px;font-size:14px;line-height:18px;height:18px;color:#333;font-weight:700;left:30px;transform-origin:0 50%;transform:scaleX(0.9062);">POWERED BY:</span>
<span class="t" style="top:897.15px;font-size:14px;line-height:18px;height:18px;color:#2bb0bd;left:125px;transform-origin:0 50%;transform:scaleX(0.9552);-webkit-text-stroke:0.3px #2bb0bd;">APACHE ISIS</span>
<div style="position:absolute;left:0px;top:61px;width:500px;height:780px;background:rgba(240,239,235,0.95);border-radius:0 0 8px 0;"></div>
<div style="position:absolute;left:0px;top:61px;width:10px;height:100px;background:#99d7db;border-radius:0 8px 8px 0;"></div>
<svg style="position:absolute;left:29.799999999999997px;top:71.3px;" width="16" height="16" viewBox="0 0 16 16"><circle cx="8" cy="8" r="6.4" fill="none" stroke="#3b3733" stroke-width="2.3"/><line x1="3.6" y1="12.4" x2="12.4" y2="3.6" stroke="#3b3733" stroke-width="2.3"/></svg>
<span class="t" style="top:73.74px;font-size:9.4px;line-height:12px;height:12px;color:#2a2a2a;left:55px;transform-origin:0 50%;">CLEAR ALL</span>
<svg style="position:absolute;left:29.799999999999997px;top:114px;" width="16" height="16" viewBox="0 0 16 16"><circle cx="8" cy="8" r="6.4" fill="none" stroke="#3b3733" stroke-width="2.3"/><line x1="3.6" y1="12.4" x2="12.4" y2="3.6" stroke="#3b3733" stroke-width="2.3"/></svg>
<svg style="position:absolute;left:60px;top:119.7px;" width="16" height="17" viewBox="0 0 16 17"><rect x="1" y="0.8" width="14" height="14.6" fill="none" stroke="#3b3733" stroke-width="1.5"/><rect x="3.3" y="2.9" width="2.6" height="2" fill="#3b3733"/><rect x="6.8" y="2.9" width="2.6" height="2" fill="#3b3733"/><rect x="10.3" y="2.9" width="2.6" height="2" fill="#3b3733"/><rect x="3.3" y="5.9" width="2.6" height="2" fill="#3b3733"/><rect x="6.8" y="5.9" width="2.6" height="2" fill="#3b3733"/><rect x="10.3" y="5.9" width="2.6" height="2" fill="#3b3733"/><rect x="3.3" y="8.9" width="2.6" height="2" fill="#3b3733"/><rect x="6.8" y="8.9" width="2.6" height="2" fill="#3b3733"/><rect x="10.3" y="8.9" width="2.6" height="2" fill="#3b3733"/><rect x="3.3" y="11.9" width="2.6" height="2" fill="#3b3733"/><rect x="10.3" y="11.9" width="2.6" height="2" fill="#3b3733"/><path d="M6.6 15.6 V12.4 M9.6 15.6 V12.4" stroke="#3b3733" stroke-width="0.9"/></svg>
<span class="t" style="top:120.74px;font-size:9.4px;line-height:12px;height:12px;color:#1d5286;font-weight:700;left:84px;transform-origin:0 50%;transform:scaleX(0.9827);">[OXF] OXFORD SUPER MALL</span>
<svg style="position:absolute;left:29.799999999999997px;top:142px;" width="16" height="16" viewBox="0 0 16 16"><circle cx="8" cy="8" r="6.4" fill="none" stroke="#3b3733" stroke-width="2.3"/><line x1="3.6" y1="12.4" x2="12.4" y2="3.6" stroke="#3b3733" stroke-width="2.3"/></svg>
<svg style="position:absolute;left:59px;top:147px;" width="18" height="18" viewBox="0 0 18 18"><path d="M6.8 1.2 L16.6 3.3 L12.9 15.2 Q11.4 17 8.8 15.9 L8.4 13.2 L3.5 11z" fill="#fff" stroke="#3b3733" stroke-width="1.4" stroke-linejoin="round"/><path d="M0.9 10.2 L8.7 13.3 L8.8 16 Q4 15.7 1.1 13.2z" fill="#3b3733" stroke="#3b3733" stroke-width="0.8" stroke-linejoin="round"/><path d="M10.3 5.4 L13.7 6.2 M9.5 8.3 L12.7 9.1 M8.7 11 L11.8 11.8" stroke="#3b3733" stroke-width="1.5"/><circle cx="8.5" cy="5" r="0.7" fill="#3b3733"/><circle cx="7.7" cy="7.8" r="0.7" fill="#3b3733"/><circle cx="6.9" cy="10.5" r="0.7" fill="#3b3733"/></svg>
<span class="t" style="top:148.74px;font-size:9.4px;line-height:12px;height:12px;color:#1d5286;font-weight:700;left:84px;transform-origin:0 50%;transform:scaleX(0.9668);">OXF-TOPMODEL-001</span>
<svg style="position:absolute;left:80px;top:176px;" width="17" height="17" viewBox="0 0 17 17"><path d="M6 2.6 V10.6 A5 2.3 0 0 0 16 10.6 V2.6z" fill="#3b3733"/><path d="M6 5.1 A5 2.3 0 0 0 16 5.1" fill="none" stroke="#efeeea" stroke-width="0.55"/><path d="M6 7.199999999999999 A5 2.3 0 0 0 16 7.199999999999999" fill="none" stroke="#efeeea" stroke-width="0.55"/><path d="M6 9.299999999999999 A5 2.3 0 0 0 16 9.299999999999999" fill="none" stroke="#efeeea" stroke-width="0.55"/><path d="M6 11.399999999999999 A5 2.3 0 0 0 16 11.399999999999999" fill="none" stroke="#efeeea" stroke-width="0.55"/><ellipse cx="11" cy="2.6" rx="5" ry="2.3" fill="#3b3733" stroke="#efeeea" stroke-width="0.6"/><path d="M0.40000000000000036 9 V13.6 A5 2.3 0 0 0 10.4 13.6 V9z" fill="#3b3733"/><path d="M0.40000000000000036 11.5 A5 2.3 0 0 0 10.4 11.5" fill="none" stroke="#efeeea" stroke-width="0.55"/><path d="M0.40000000000000036 13.6 A5 2.3 0 0 0 10.4 13.6" fill="none" stroke="#efeeea" stroke-width="0.55"/><ellipse cx="5.4" cy="9" rx="5" ry="2.3" fill="#3b3733" stroke="#efeeea" stroke-width="0.6"/></svg>
<span class="t" style="top:176.74px;font-size:9.4px;line-height:12px;height:12px;color:#1d5286;font-weight:700;left:104px;transform-origin:0 50%;transform:scaleX(0.9732);">OXF-TOPMODEL-001: RENT</span>
<svg style="position:absolute;left:100px;top:203.5px;" width="17" height="17" viewBox="0 0 17 17"><circle cx="6" cy="10.4" r="5.3" fill="#fff" stroke="#3b3733" stroke-width="1.6"/><text x="6" y="13.5" font-family="Liberation Sans,Arial,sans-serif" font-size="8.6" font-weight="700" text-anchor="middle" fill="#111" stroke="#111" stroke-width="0.25">5</text><circle cx="12" cy="4.7" r="3.8" fill="#222"/><rect x="11.5" y="2.4" width="1" height="2.9" fill="#fff"/><rect x="11.5" y="6" width="1" height="1" fill="#fff"/></svg>
<span class="t" style="top:204.74px;font-size:9.4px;line-height:12px;height:12px;color:#1d5286;font-weight:700;left:124px;transform-origin:0 50%;transform:scaleX(0.9779);">OXF-TOPMODEL-001: RENT: 15-07-2011/14-07-2012</span>
<div style="position:absolute;left:90px;top:224px;width:251px;height:23px;background:#fff;border-radius:4px;"></div>
<svg style="position:absolute;left:100px;top:231.5px;" width="17" height="17" viewBox="0 0 17 17"><circle cx="6" cy="10.4" r="5.3" fill="#fff" stroke="#3b3733" stroke-width="1.6"/><text x="6" y="13.5" font-family="Liberation Sans,Arial,sans-serif" font-size="8.6" font-weight="700" text-anchor="middle" fill="#111" stroke="#111" stroke-width="0.25">5</text><circle cx="12" cy="4.7" r="3.8" fill="#222"/><rect x="11.5" y="2.4" width="1" height="2.9" fill="#fff"/><rect x="11.5" y="6" width="1" height="1" fill="#fff"/></svg>
<span class="t" style="top:232.74px;font-size:9.4px;line-height:12px;height:12px;color:#1d5286;font-weight:700;left:124px;transform-origin:0 50%;transform:scaleX(0.9772);text-decoration:underline;">OXF-TOPMODEL-001: RENT: 15-07-2013/----------</span>
<svg style="position:absolute;left:80px;top:260px;" width="17" height="17" viewBox="0 0 17 17"><path d="M6 2.6 V10.6 A5 2.3 0 0 0 16 10.6 V2.6z" fill="#3b3733"/><path d="M6 5.1 A5 2.3 0 0 0 16 5.1" fill="none" stroke="#efeeea" stroke-width="0.55"/><path d="M6 7.199999999999999 A5 2.3 0 0 0 16 7.199999999999999" fill="none" stroke="#efeeea" stroke-width="0.55"/><path d="M6 9.299999999999999 A5 2.3 0 0 0 16 9.299999999999999" fill="none" stroke="#efeeea" stroke-width="0.55"/><path d="M6 11.399999999999999 A5 2.3 0 0 0 16 11.399999999999999" fill="none" stroke="#efeeea" stroke-width="0.55"/><ellipse cx="11" cy="2.6" rx="5" ry="2.3" fill="#3b3733" stroke="#efeeea" stroke-width="0.6"/><path d="M0.40000000000000036 9 V13.6 A5 2.3 0 0 0 10.4 13.6 V9z" fill="#3b3733"/><path d="M0.40000000000000036 11.5 A5 2.3 0 0 0 10.4 11.5" fill="none" stroke="#efeeea" stroke-width="0.55"/><path d="M0.40000000000000036 13.6 A5 2.3 0 0 0 10.4 13.6" fill="none" stroke="#efeeea" stroke-width="0.55"/><ellipse cx="5.4" cy="9" rx="5" ry="2.3" fill="#3b3733" stroke="#efeeea" stroke-width="0.6"/></svg>
<span class="t" style="top:260.74px;font-size:9.4px;line-height:12px;height:12px;color:#1d5286;font-weight:700;left:104px;transform-origin:0 50%;transform:scaleX(0.9779);">OXF-TOPMODEL-001: SERVICE CHARGE</span>
<svg style="position:absolute;left:100px;top:287.5px;" width="17" height="17" viewBox="0 0 17 17"><circle cx="6" cy="10.4" r="5.3" fill="#fff" stroke="#3b3733" stroke-width="1.6"/><text x="6" y="13.5" font-family="Liberation Sans,Arial,sans-serif" font-size="8.6" font-weight="700" text-anchor="middle" fill="#111" stroke="#111" stroke-width="0.25">5</text><circle cx="12" cy="4.7" r="3.8" fill="#222"/><rect x="11.5" y="2.4" width="1" height="2.9" fill="#fff"/><rect x="11.5" y="6" width="1" height="1" fill="#fff"/></svg>
<span class="t" style="top:288.74px;font-size:9.4px;line-height:12px;height:12px;color:#1d5286;font-weight:700;left:124px;transform-origin:0 50%;transform:scaleX(0.9746);">OXF-TOPMODEL-001: SERVICE CHARGE: 15-07-2012/14-07-2013</span>
<svg style="position:absolute;left:29.799999999999997px;top:310px;" width="16" height="16" viewBox="0 0 16 16"><circle cx="8" cy="8" r="6.4" fill="none" stroke="#3b3733" stroke-width="2.3"/><line x1="3.6" y1="12.4" x2="12.4" y2="3.6" stroke="#3b3733" stroke-width="2.3"/></svg>
<svg style="position:absolute;left:60px;top:316.3px;" width="17" height="16" viewBox="0 0 17 16"><ellipse cx="4.3" cy="3.4" rx="2.1" ry="2.7" fill="#3b3733"/><ellipse cx="11.9" cy="3.4" rx="2.1" ry="2.7" fill="#3b3733"/><rect x="3.3" y="5" width="2" height="3" fill="#3b3733"/><rect x="10.9" y="5" width="2" height="3" fill="#3b3733"/><ellipse cx="3.9" cy="8.6" rx="3.7" ry="1.9" fill="#3b3733"/><ellipse cx="12.3" cy="8.6" rx="3.7" ry="1.9" fill="#3b3733"/><ellipse cx="8.1" cy="7" rx="2.9" ry="3.5" fill="#efeeea"/><ellipse cx="8.1" cy="7" rx="2.3" ry="2.9" fill="#3b3733"/><rect x="7" y="9" width="2.2" height="3" fill="#3b3733"/><ellipse cx="8.1" cy="12.5" rx="4.8" ry="2.1" fill="#3b3733"/></svg>
<span class="t" style="top:316.74px;font-size:9.4px;line-height:12px;height:12px;color:#1d5286;font-weight:700;left:84px;transform-origin:0 50%;transform:scaleX(0.9730);">TOPMODEL-TOPMODEL FASHION</span>
<div style="position:absolute;left:1676px;top:1044px;width:156px;height:26px;background:#f8f8f4;border:1px solid #444;box-sizing:border-box;box-shadow:0 0 0 1px rgba(255,255,255,0.5) inset;"></div>
<span class="t" style="top:1048.15px;font-size:14px;line-height:18px;height:18px;color:#4646e8;left:1685px;transform-origin:0 50%;transform:scaleX(0.9452);-webkit-text-stroke:0.3px #4646e8;">WICKET AJAX DEBUG</span>
<div style="position:absolute;left:0px;top:1054px;width:613px;height:27px;background:#dfdfdf;border-top:1px solid #b9b9b9;border-right:1px solid #b9b9b9;border-radius:0 4px 0 0;box-sizing:border-box;"></div>
<span class="t" style="top:1057.63px;font-size:15.5px;line-height:20px;height:20px;color:#555;left:3.5px;transform-origin:0 50%;transform:scaleX(0.9509);">localhost:8080/wicket/entity/org.estatio.dom.lease.LeaseTermForIndexableRent:L_48</span>
<div style="position:absolute;left:0px;top:0px;width:1842px;height:25px;background:#80d3d2;border-bottom:1px solid #5fa9a8;box-sizing:border-box;"></div>
<div style="position:absolute;left:0px;top:25px;width:1842px;height:36px;background:#eee;background:linear-gradient(#fcfcfc,#f1f1f1 40%,#e6e6e6);border-bottom:1px solid #a6a6a6;box-sizing:border-box;"></div>
<svg style="position:absolute;left:200px;top:4px;" width="36" height="18" viewBox="0 0 36 18"><path d="M3 1.7 H27.6 Q29.4 1.7 30 3.2 L33.6 15 Q33.8 16.3 32.2 16.3 H9 Q7.4 16.3 6.8 14.8 L2.6 3 Q2.3 1.7 3 1.7z" fill="#c4dfe3" stroke="#7dbdbd" stroke-width="1"/></svg>
<svg style="position:absolute;left:0px;top:-1px;" width="212" height="27" viewBox="0 0 212 27"><defs><linearGradient id="tg" x1="0" y1="0" x2="0" y2="1"><stop offset="0" stop-color="#ffffff"/><stop offset="1" stop-color="#fbfbfb"/></linearGradient></defs><path d="M-3 25.5 C3.5 25.5 4.6 22.6 5.8 19.6 L11.4 5 C12.4 2.4 13.6 1.5 16 1.5 H190 C192.4 1.5 193.6 2.4 194.6 5 L200.2 19.6 C201.4 22.6 202.5 25.5 209 25.5 V27 H-3z" fill="url(#tg)" stroke="#6f9d9c" stroke-width="1"/><rect x="-3" y="26" width="212" height="1.2" fill="#fcfcfc"/></svg>
<svg style="position:absolute;left:16px;top:6px;" width="16" height="16" viewBox="0 0 16 16"><rect x="0" y="0" width="16" height="16" rx="2" fill="#1c3fd6"/><path d="M5.2 2.2 h3.4 l-2.2 11.6 h-3.4z" fill="#f83a14" stroke="#111" stroke-width="0.6"/><rect x="9.4" y="4" width="3.4" height="3" fill="#f83a14" stroke="#111" stroke-width="0.5" transform="skewX(-10) translate(1.2 0)"/><rect x="9.4" y="8.6" width="3.4" height="3" fill="#f83a14" stroke="#111" stroke-width="0.5" transform="skewX(-10) translate(2 0)"/></svg>
<span class="t" style="top:2.86px;font-size:16px;line-height:21px;height:21px;color:#111;left:35.8px;transform-origin:0 50%;transform:scaleX(0.8607);">OXF-TOPMODEL-001</span>
<div style="position:absolute;left:150px;top:3px;width:26px;height:21px;background:transparent;background:linear-gradient(90deg,rgba(253,253,253,0),rgba(253,253,253,0.92));"></div>
<svg style="position:absolute;left:180px;top:9.5px;" width="10" height="10" viewBox="0 0 10 10"><path d="M1.6 1.6 L8.4 8.4 M8.4 1.6 L1.6 8.4" stroke="#444" stroke-width="1.7"/></svg>
<div style="position:absolute;left:1723px;top:16px;width:14px;height:2px;background:#1d1d1d;"></div>
<svg style="position:absolute;left:1756px;top:3px;" width="18" height="17" viewBox="0 0 18 17"><path d="M4.6 4.6 V1.6 H16.2 V12.6 H13.4" fill="none" stroke="#1d1d1d" stroke-width="1.2"/><rect x="1.6" y="5.2" width="11.6" height="10.4" fill="none" stroke="#1d1d1d" stroke-width="1.3"/><rect x="1.6" y="5.2" width="11.6" height="2.4" fill="#1d1d1d"/><rect x="4.6" y="1.2" width="11.6" height="1.6" fill="#1d1d1d"/></svg>
<div style="position:absolute;left:1781px;top:0px;width:58px;height:24px;background:#c75050;"></div>
<svg style="position:absolute;left:1803px;top:6px;" width="13" height="12" viewBox="0 0 13 12"><path d="M1.4 1.8 L11.6 10 M11.6 1.8 L1.4 10" stroke="#fff" stroke-width="2.3"/></svg>
<svg style="position:absolute;left:9px;top:33.5px;" width="18" height="18" viewBox="0 0 18 18"><path d="M15 9 H4.6 M9 3.4 L3.4 9 L9 14.6" fill="none" stroke="#585858" stroke-width="3.2" stroke-linecap="round" stroke-linejoin="round"/></svg>
<svg style="position:absolute;left:38px;top:33.5px;" width="18" height="18" viewBox="0 0 18 18"><path d="M2.4 9 H13.6 M9.2 3.8 L14.4 9 L9.2 14.2" fill="none" stroke="#c9c9c9" stroke-width="2.4" stroke-linecap="round" stroke-linejoin="round"/></svg>
<svg style="position:absolute;left:67px;top:33.5px;" width="18" height="18" viewBox="0 0 18 18"><path d="M13.6 10.6 A5.4 5.4 0 1 1 11.4 4.6" fill="none" stroke="#585858" stroke-width="3"/><path d="M9.2 1.4 L16 1 L15.6 8z" fill="#585858"/></svg>
<svg style="position:absolute;left:96.5px;top:34px;" width="16" height="17" viewBox="0 0 16 17"><path d="M8 1.2 L15 8.2 H13 V15.8 H9.6 V10.2 H6.4 V15.8 H3 V8.2 H1z" fill="#585858" stroke="#585858" stroke-width="0.8" stroke-linejoin="round"/><path d="M11.8 1.4 L13.4 1 V5.4 L11.8 3.8z" fill="#585858"/></svg>
<div style="position:absolute;left:123px;top:29px;width:1660px;height:27px;background:#fff;border:1px solid #a9a9a9;border-radius:3px;box-sizing:border-box;box-shadow:inset 0 1px 1px rgba(0,0,0,0.12);"></div>
<svg style="position:absolute;left:130px;top:35px;" width="13" height="16" viewBox="0 0 13 16"><path d="M1 0.8 H8 L11.6 4.6 V14.8 H1z" fill="#fdfdfd" stroke="#8a8a8a" stroke-width="1"/><path d="M8 0.8 V4.6 H11.6" fill="none" stroke="#8a8a8a" stroke-width="1"/></svg>
<span class="t" style="top:31.88px;font-size:16.5px;line-height:21px;height:21px;color:#111;left:149.5px;transform-origin:0 50%;transform:scaleX(0.9904);">localhost</span>
<span class="t" style="top:31.88px;font-size:16.5px;line-height:21px;height:21px;color:#8a8a8a;left:214px;transform-origin:0 50%;transform:scaleX(0.9295);">:8080/wicket/entity/org.estatio.dom.lease.LeaseTermForIndexableRent:L_48</span>
<svg style="position:absolute;left:1760px;top:33px;" width="19" height="19" viewBox="0 0 19 19"><path d="M9.50 2.40 L11.79 6.84 L16.73 7.65 L13.21 11.21 L13.97 16.15 L9.50 13.90 L5.03 16.15 L5.79 11.21 L2.27 7.65 L7.21 6.84z" fill="#fff" stroke="#8a8a8a" stroke-width="1.5" stroke-linejoin="round"/></svg>
<svg style="position:absolute;left:1795px;top:38px;" width="9" height="9" viewBox="0 0 9 9"><path d="M1 1 L4 4.4 L1 7.8 M5 1 L8 4.4 L5 7.8" fill="none" stroke="#444" stroke-width="1.3"/></svg>
<div style="position:absolute;left:1806px;top:34px;width:1px;height:17px;background:#c4c4c4;"></div>
<div style="position:absolute;left:1820px;top:36px;width:13px;height:3px;background:#555;border-radius:1.5px;"></div>
<div style="position:absolute;left:1820px;top:41px;width:13px;height:3px;background:#555;border-radius:1.5px;"></div>
<div style="position:absolute;left:1820px;top:46px;width:13px;height:3px;background:#555;border-radius:1.5px;"></div>
<div style="position:absolute;left:1842px;top:0px;width:9px;height:1080px;background:#4c6468;background:linear-gradient(#475a64 0,#485c66 6%,#4f6269 21%,#56696b 22%,#66736a 27%,#5b6e68 32%,#5f7169 37%,#6b7967 40%,#5e7468 43%,#566c6a 57%,#4d6669 59%,#49636a 64%,#566a67 80%,#476267 90%,#435e63 100%);"></div>
<div style="position:absolute;left:1839px;top:0px;width:3px;height:25px;background:#80d3d2;border-bottom:1px solid #5fa9a8;box-sizing:border-box;"></div>
<div style="position:absolute;left:1842px;top:0px;width:1px;height:1080px;background:rgba(35,50,55,0.5);"></div>
<div style="position:absolute;left:1843px;top:69px;width:8px;height:52px;background:#7a898f;background:linear-gradient(#7a898f,#66797f);border:1px solid #93a0a5;border-right:none;box-sizing:border-box;"></div>
<div style="position:absolute;left:1843px;top:125px;width:8px;height:52px;background:#9ca7ab;background:linear-gradient(#9ca7ab,#8c979b);border:1px solid #e4e8e8;border-right:none;box-sizing:border-box;"></div>
<div style="position:absolute;left:1843px;top:181px;width:8px;height:52px;background:#73838a;background:linear-gradient(#73838a,#7d8987);border:1px solid #98a4a6;border-right:none;box-sizing:border-box;"></div>
<div style="position:absolute;left:1843px;top:349px;width:8px;height:52px;background:#848f8d;background:linear-gradient(#848f8d,#7b8983);border:1px solid #a3adaa;border-right:none;box-sizing:border-box;"></div>
<div style="position:absolute;left:1843px;top:461px;width:8px;height:52px;background:#81928b;background:linear-gradient(#81928b,#7a8c84);border:1px solid #a1afa8;border-right:none;box-sizing:border-box;"></div>
<div style="position:absolute;left:1843px;top:517px;width:8px;height:52px;background:#808a86;background:linear-gradient(#808a86,#84908a);border:1px solid #a3aca8;border-right:none;box-sizing:border-box;"></div>
<div style="position:absolute;left:1843px;top:573px;width:8px;height:52px;background:#7f8c8c;background:linear-gradient(#7f8c8c,#6f8487);border:1px solid #a0acad;border-right:none;box-sizing:border-box;"></div>
<div style="position:absolute;left:1848px;top:49px;width:3px;height:3px;background:#141a1c;border-top:1px solid #9aa5a6;box-sizing:border-box;"></div>
<div style="position:absolute;left:1848px;top:53px;width:3px;height:3px;background:#141a1c;border-top:1px solid #9aa5a6;box-sizing:border-box;"></div>
<div style="position:absolute;left:1848px;top:57px;width:3px;height:3px;background:#141a1c;border-top:1px solid #9aa5a6;box-sizing:border-box;"></div>
<div style="position:absolute;left:1848px;top:897px;width:3px;height:3px;background:#141a1c;border-top:1px solid #9aa5a6;box-sizing:border-box;"></div>
<div style="position:absolute;left:1848px;top:901px;width:3px;height:3px;background:#141a1c;border-top:1px solid #9aa5a6;box-sizing:border-box;"></div>
<div style="position:absolute;left:1848px;top:905px;width:3px;height:3px;background:#141a1c;border-top:1px solid #9aa5a6;box-sizing:border-box;"></div>
<span class="t" style="top:1050.08px;font-size:16.5px;line-height:21px;height:21px;color:#fff;left:1844.3px;transform-origin:0 50%;">0</span>
</body></html>
